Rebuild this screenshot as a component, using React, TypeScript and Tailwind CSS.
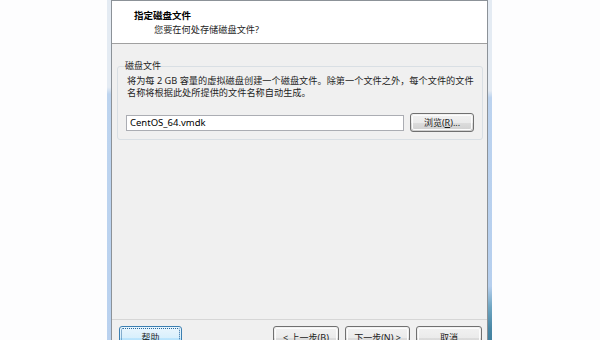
import React from "react";

function WinButton({
  children,
  className = "",
  focused = false,
}: {
  children: React.ReactNode;
  className?: string;
  focused?: boolean;
}) {
  return (
    <div
      className={
        "relative flex items-center justify-center rounded-[3px] border text-[9px] leading-[12px] text-[#1a1a1a] " +
        (focused
          ? "border-[#3c7fb1] bg-[linear-gradient(to_bottom,#eaf6fd_0%,#d9f0fc_50%,#bee6fd_51%,#a7d9f5_100%)] "
          : "border-[#707070] bg-[linear-gradient(to_bottom,#f2f2f2_0%,#ebebeb_50%,#dddddd_51%,#cfcfcf_100%)] ") +
        className
      }
    >
      <div
        className={
          "absolute inset-[1px] rounded-[2px] border " +
          (focused ? "border-dotted border-[#2a6aa0]" : "border-[#fcfcfc]")
        }
      />
      <span className="relative">{children}</span>
    </div>
  );
}

export default function App() {
  return (
    <div className="flex h-[340px] w-[600px] overflow-hidden bg-[#fdfdfe] font-['Noto_Sans','Noto_Sans_CJK_SC',sans-serif]">
      <div className="ml-[107px] flex h-[340px] w-[385px] flex-col">
        {/* glass bottom of caption */}
        <div className="h-[3px] w-full bg-[linear-gradient(to_right,#c9d2db_0%,#aeb9c4_20%,#c9d2db_32%,#7f8a96_50%,#9aa5b0_58%,#c9d2db_66%,#8b96a2_80%,#c3ccd6_90%,#c9d2db_100%)]" />
        <div className="flex flex-1">
          <div className="w-[4px] bg-[linear-gradient(to_bottom,#e4ebf3_0%,#e4ebf3_25%,#bdd4ef_27%,#b9d1ef_100%)]" />
          <div className="flex w-[377px] flex-col border-x border-t border-[#8c9298]">
            {/* header */}
            <div className="h-[43px] border-b border-[#a0a0a0] bg-white">
              <div className="pl-[22px] pt-[8px] text-[9.5px] font-bold leading-[13px] text-black">
                指定磁盘文件
              </div>
              <div className="pl-[42px] pt-[1px] text-[9.2px] leading-[13px] text-[#1e1e1e]">
                您要在何处存储磁盘文件?
              </div>
            </div>
            {/* body */}
            <div className="h-[275px] bg-[#f0f0f0] pt-[16px]">
              <fieldset className="ml-[5px] mr-[7px] rounded-[3px] border border-[#d9dfe4] px-[8px] pb-[7px]">
                <legend className="ml-[-1px] px-0 text-[9px] leading-[12px] text-[#1e1e1e]">
                  磁盘文件
                </legend>
                <div className="ml-[1px] mt-[3px] text-[9.2px] leading-[12px] text-[#1e1e1e]">
                  将为每 2 GB 容量的虚拟磁盘创建一个磁盘文件。除第一个文件之外，每个文件的文件
                  <br />
                  名称将根据此处所提供的文件名称自动生成。
                </div>
                <div className="mt-[14px] flex items-center">
                  <div className="flex h-[16px] w-[278px] items-center border border-[#abadb3] bg-white pl-[3px] text-[9.5px] leading-[12px] text-black">
                    CentOS_64.vmdk
                  </div>
                  <WinButton className="ml-[6px] h-[19px] w-[64px]">
                    浏览(<span className="underline">R</span>)...
                  </WinButton>
                </div>
              </fieldset>
            </div>
            {/* footer */}
            <div className="flex flex-1 border-t border-[#d6d6d6] bg-[#f0f0f0] pl-[7px] pr-[5px] pt-[6px]">
              <WinButton focused className="h-[23px] w-[63px]">
                帮助
              </WinButton>
              <div className="flex-1" />
              <WinButton className="h-[23px] w-[66px]">
                &lt; 上一步(<span className="underline">B</span>)
              </WinButton>
              <WinButton className="ml-[6px] h-[23px] w-[65px]">
                下一步(<span className="underline">N</span>) &gt;
              </WinButton>
              <WinButton className="ml-[6px] h-[23px] w-[66px]">
                取消
              </WinButton>
            </div>
          </div>
          <div className="w-[4px] bg-[linear-gradient(to_bottom,#e4ebf3_0%,#e4ebf3_26%,#bcd3ef_28%,#b6cfee_82%,#6fa6c2_88%,#4a88a6_94%,#3d7c9b_100%)]" />
        </div>
      </div>
    </div>
  );
}
